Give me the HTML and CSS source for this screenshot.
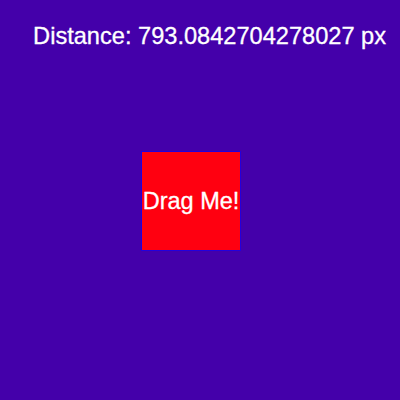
FILE: index.html
```html
<!DOCTYPE html>
<html>
<head>
<meta charset="utf-8">
<link rel="stylesheet" href="styles.css">
</head>
<body>
<div class="stage">
  <div class="distance">Distance: 793.0842704278027 px</div>
  <div class="box">Drag Me!</div>
</div>
</body>
</html>
```
FILE: styles.css
```css
html, body {
  margin: 0;
  padding: 0;
  width: 400px;
  height: 400px;
  background: #4400aa;
  font-family: "Liberation Sans", Arial, sans-serif;
  overflow: hidden;
}
.stage {
  position: relative;
  width: 400px;
  height: 400px;
}
.distance {
  position: absolute;
  top: 22px;
  right: 14px;
  color: #fff;
  font-size: 23.6px;
  line-height: 28px;
  white-space: nowrap;
  -webkit-text-stroke: 0.3px #fff;
}
.box {
  position: absolute;
  left: 141px;
  top: 151px;
  width: 98px;
  height: 98px;
  border: 1px solid #2200dd;
  background: #ff0010;
  color: #fff;
  font-size: 23.5px;
  display: flex;
  align-items: center;
  justify-content: center;
  white-space: nowrap;
  -webkit-text-stroke: 0.3px #fff;
}
```
